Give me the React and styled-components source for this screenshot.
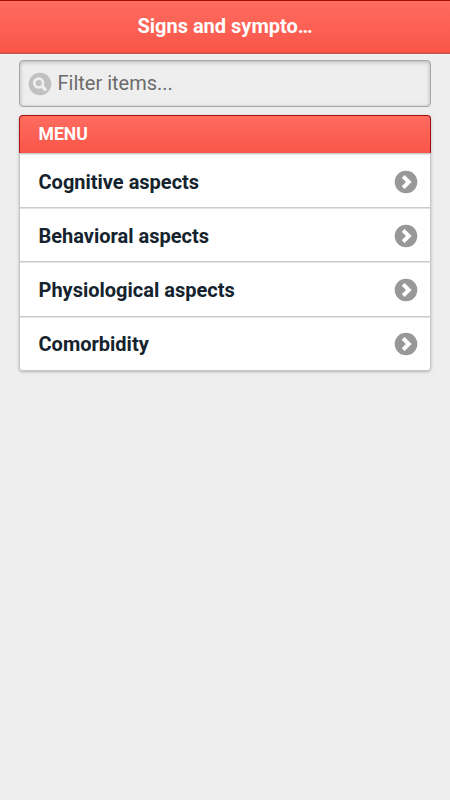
import React, { useState } from 'react';
import styled, { createGlobalStyle } from 'styled-components';

const GlobalStyle = createGlobalStyle`
  * {
    box-sizing: border-box;
  }
  body {
    margin: 0;
    background: #eee;
    font-family: Roboto, sans-serif;
  }
`;

const Page = styled.div`
  min-height: 800px;
  background: #eee;
`;

const Header = styled.header`
  display: flex;
  justify-content: center;
  height: 54px;
  padding: 0 137px;
  border-top: 1px solid #a80f06;
  border-bottom: 1px solid #c4564d;
  background: linear-gradient(#ff6c60, #fa5549);
  box-shadow: inset 0 -1px 0 #e8503f, 0 1px 0 #f6f6f6;
`;

const Title = styled.h1`
  margin: 0;
  overflow: hidden;
  white-space: nowrap;
  font-size: 20px;
  font-weight: 700;
  line-height: 50px;
  color: #fff;
`;

const Content = styled.main`
  padding: 6px 19px 0;
`;

const SearchBox = styled.label`
  display: flex;
  align-items: center;
  height: 47px;
  padding-left: 8px;
  border: 1px solid #a6a6a6;
  border-radius: 4px;
  background: #eee;
  box-shadow: inset 0 1px 4px rgba(0, 0, 0, 0.25);
`;

const SearchInput = styled.input`
  flex: 1;
  min-width: 0;
  margin-left: 5.5px;
  padding: 0 0 2px;
  border: none;
  outline: none;
  background: transparent;
  font-family: inherit;
  font-size: 20px;
  color: #333;
  &::placeholder {
    color: #6b6b6b;
    opacity: 1;
  }
`;

const List = styled.ul`
  margin: 8px 0 0;
  padding: 0;
  list-style: none;
  border-radius: 4px;
  box-shadow: 0 1px 3px rgba(0, 0, 0, 0.25);
`;

const Divider = styled.li`
  height: 38px;
  padding-left: 18.5px;
  border: 1px solid #a80f0f;
  border-bottom: none;
  border-radius: 4px 4px 0 0;
  background: linear-gradient(#ff6c60, #fa5549);
  font-size: 17.6px;
  font-weight: 700;
  line-height: 36px;
  color: #fff;
`;

const Item = styled.li`
  display: flex;
  align-items: center;
  justify-content: space-between;
  height: ${(props) => props.$height}px;
  padding: 2px 12px 0 18.5px;
  border: 1px solid #c8c8c8;
  border-top: 1px solid #ccc;
  border-bottom: none;
  background: #fff;
  box-shadow: inset 0 1px 0 #e2e2e2;
  font-size: 20px;
  font-weight: 700;
  color: #14232d;
  cursor: pointer;
  &:last-child {
    padding-top: 0;
    border-bottom: 1px solid #c4c4c4;
    border-radius: 0 0 4px 4px;
  }
`;

const SearchIcon = () => (
  <svg width="24" height="24" viewBox="0 0 24 24">
    <circle cx="12" cy="12" r="11.3" fill="#c1c1c1" />
    <circle cx="10.7" cy="11" r="4.4" fill="none" stroke="#f0f0f0" strokeWidth="2.6" />
    <path d="M14.2 14.5l2.9 2.9" stroke="#f0f0f0" strokeWidth="3.2" strokeLinecap="round" />
  </svg>
);

const ArrowIcon = () => (
  <svg width="24" height="24" viewBox="0 0 24 24">
    <circle cx="12" cy="12" r="11.3" fill="#989898" />
    <path d="M9.2 6.3l5.6 5.7-5.6 5.7" fill="none" stroke="#fff" strokeWidth="4" />
  </svg>
);

const items = [
  { name: 'Cognitive aspects', height: 54 },
  { name: 'Behavioral aspects', height: 54 },
  { name: 'Physiological aspects', height: 55 },
  { name: 'Comorbidity', height: 55 },
];

const App = () => {
  const [filter, setFilter] = useState('');

  const visible = items.filter((item) =>
    item.name.toLowerCase().includes(filter.toLowerCase())
  );

  return (
    <Page>
      <GlobalStyle />
      <Header>
        <Title>Signs and sympto…</Title>
      </Header>
      <Content>
        <SearchBox>
          <SearchIcon />
          <SearchInput
            placeholder="Filter items..."
            value={filter}
            onChange={(e) => setFilter(e.target.value)}
          />
        </SearchBox>
        <List>
          <Divider>MENU</Divider>
          {visible.map((item) => (
            <Item key={item.name} $height={item.height}>
              {item.name}
              <ArrowIcon />
            </Item>
          ))}
        </List>
      </Content>
    </Page>
  );
};

export default App;
